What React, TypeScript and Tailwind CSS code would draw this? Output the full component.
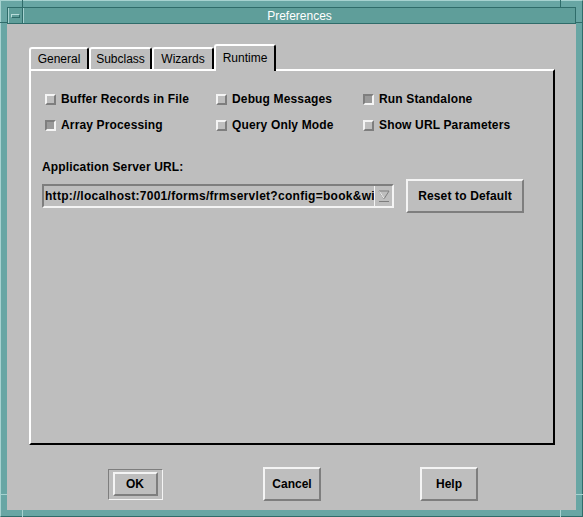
import React from "react";

const font = { fontFamily: '"Liberation Sans", Arial, sans-serif' };

function Checkbox({ label, checked }: { label: string; checked?: boolean }) {
  return (
    <div className="flex h-[18px] items-center gap-[5px]">
      <span
        className={
          checked
            ? "block h-[11px] w-[11px] border-2 border-t-[#7e7e7e] border-l-[#7e7e7e] border-b-[#f4f4f4] border-r-[#f4f4f4] bg-[#9a9a9a]"
            : "block h-[11px] w-[11px] border-2 border-t-[#f4f4f4] border-l-[#f4f4f4] border-b-[#7e7e7e] border-r-[#7e7e7e] bg-[#bebebe]"
        }
      />
      <span className="text-[12px] font-bold leading-[14px] tracking-[0.15px] text-black">{label}</span>
    </div>
  );
}

function Tab({ label, width, active }: { label: string; width: string; active?: boolean }) {
  if (active) {
    return (
      <div
        className={
          "relative z-10 -mb-[2px] flex h-[27px] items-center justify-center rounded-t-[3px] border-l-2 border-t-2 border-r-2 border-l-white border-t-white border-r-black bg-[#bebebe] pb-[2px] text-[12px] " +
          width
        }
      >
        {label}
      </div>
    );
  }
  return (
    <div
      className={
        "flex h-[22px] items-center justify-center rounded-t-[3px] border-l-2 border-t-2 border-r-2 border-l-white border-t-white border-r-black bg-[#bebebe] text-[12px] " +
        width
      }
    >
      {label}
    </div>
  );
}

function Button({ label, className }: { label: string; className: string }) {
  return (
    <div
      className={
        "flex items-center justify-center border-2 border-t-[#f4f4f4] border-l-[#f4f4f4] border-b-[#7e7e7e] border-r-[#7e7e7e] bg-[#bebebe] text-[12px] font-bold " +
        className
      }
    >
      {label}
    </div>
  );
}

export default function App() {
  return (
    <div style={font} className="relative h-[517px] w-[583px] overflow-hidden bg-[#68a6a4] text-black">
      {/* frame edges */}
      <div className="flex h-full w-full flex-col border-l border-t border-r border-b border-l-[#a6d2d0] border-t-[#a6d2d0] border-r-[#2f6c6a] border-b-[#2f6c6a] pt-[6px] pr-[6px] pb-[6px] pl-[6px]">
        {/* title bar */}
        <div className="flex h-[17px] border border-[#2f6c6a] bg-[#5f9e9a]">
          <div className="flex w-[15px] items-center justify-center border-r border-r-[#2f6c6a] border-l border-l-[#a6d2d0]">
            <span className="block h-[4px] w-[9px] border border-t-[#b8dcda] border-l-[#b8dcda] border-b-[#2f6c6a] border-r-[#2f6c6a]" />
          </div>
          <div className="flex flex-1 items-center justify-center border-l border-l-[#a6d2d0] text-[12px] leading-[14px] text-white">
            Preferences
          </div>
        </div>

        {/* body */}
        <div className="flex h-[486px] flex-col bg-[#bebebe] pl-[22px] pr-[21px] pt-[20px]">
          <div className="flex h-[25px] items-end">
            <Tab label="General" width="w-[60px]" />
            <Tab label="Subclass" width="w-[63px]" />
            <Tab label="Wizards" width="w-[62px]" />
            <Tab label="Runtime" width="w-[62px]" active />
          </div>

          <div className="h-[376px] border-2 border-t-white border-l-white border-b-black border-r-black pl-[11px] pt-[19px]">
            <div className="ml-[3px] grid grid-cols-[171px_147px_auto] gap-y-[8px]">
              <Checkbox label="Buffer Records in File" />
              <Checkbox label="Debug Messages" />
              <Checkbox label="Run Standalone" checked />
              <Checkbox label="Array Processing" checked />
              <Checkbox label="Query Only Mode" />
              <Checkbox label="Show URL Parameters" />
            </div>

            <div className="mt-[26px] text-[12px] font-bold leading-[14px] tracking-[0.15px]">Application Server URL:</div>

            <div className="mt-[5px] flex items-center gap-[12px]">
              <div className="flex h-[24px] w-[352px] items-center border-2 border-t-[#7e7e7e] border-l-[#7e7e7e] border-b-[#f4f4f4] border-r-[#f4f4f4]">
                <div className="flex-1 overflow-hidden whitespace-nowrap pl-[1px] text-[12px] font-bold leading-[14px] tracking-[0.28px]">
                  http://localhost:7001/forms/frmservlet?config=book&amp;wi
                </div>
                <div className="flex h-full w-[18px] items-center justify-center border-l border-l-[#f4f4f4]">
                  <svg width="12" height="14" viewBox="0 0 12 14">
                    <path d="M1 2 L11 2 L6 10 Z" fill="#bebebe" stroke="#7e7e7e" strokeWidth="1" />
                    <path d="M1.5 2.5 L6 9.5" stroke="#f4f4f4" strokeWidth="1" />
                    <line x1="1" y1="12.5" x2="11" y2="12.5" stroke="#7e7e7e" strokeWidth="1" />
                  </svg>
                </div>
              </div>
              <Button label="Reset to Default" className="h-[34px] w-[118px] tracking-[0.15px]" />
            </div>
          </div>

          <div className="mx-auto mt-[22px] grid w-[471px] grid-cols-3 items-center justify-items-center">
            <div className="flex h-[31px] w-[55px] items-center justify-center border border-t-[#7e7e7e] border-l-[#7e7e7e] border-b-[#f4f4f4] border-r-[#f4f4f4]">
              <Button label="OK" className="h-[24px] w-[45px]" />
            </div>
            <Button label="Cancel" className="h-[34px] w-[58px]" />
            <Button label="Help" className="h-[34px] w-[58px]" />
          </div>
        </div>
      </div>

      {/* resize handle notches */}
      <div className="absolute left-[22px] top-0 h-[7px] w-px bg-[#2f6c6a]" />
      <div className="absolute right-[22px] top-0 h-[7px] w-px bg-[#2f6c6a]" />
      <div className="absolute left-0 top-[22px] h-px w-[7px] bg-[#2f6c6a]" />
      <div className="absolute right-0 top-[22px] h-px w-[7px] bg-[#2f6c6a]" />
      <div className="absolute left-0 bottom-[22px] h-px w-[7px] bg-[#a6d2d0]" />
      <div className="absolute right-0 bottom-[22px] h-px w-[7px] bg-[#a6d2d0]" />
      <div className="absolute left-[22px] bottom-0 h-[7px] w-px bg-[#a6d2d0]" />
      <div className="absolute right-[22px] bottom-0 h-[7px] w-px bg-[#a6d2d0]" />
    </div>
  );
}
